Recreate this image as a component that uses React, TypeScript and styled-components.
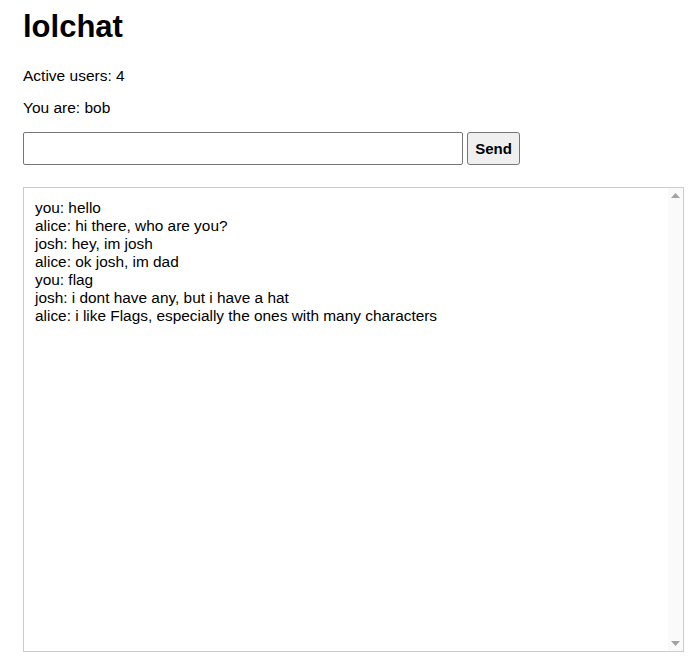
import React from "react";
import styled, { createGlobalStyle } from "styled-components";

const Global = createGlobalStyle`
  html, body { margin: 0; padding: 0; background: #fff; }
  body { font-family: "Liberation Sans", Arial, sans-serif; color: #000; font-size: 16px; }
`;

const Page = styled.div`
  display: flex;
  flex-direction: column;
  align-items: flex-start;
  padding: 9px 23px 0;
`;

const Title = styled.h1`
  font-size: 31px;
  font-weight: bold;
  margin: 0 0 22px;
  line-height: 36px;
`;

const Info = styled.p`
  margin: 0 0 14px;
  font-size: 15.5px;
  line-height: 18.4px;
`;

const Form = styled.form`
  display: flex;
  gap: 4px;
  margin: 0 0 22px;
`;

const Input = styled.input`
  box-sizing: border-box;
  width: 440px;
  height: 33px;
  border: 1px solid #767676;
  border-radius: 2px;
  padding: 1px 4px;
  font-family: "Liberation Sans", Arial, sans-serif;
  font-size: 16px;
  background: #fff;
`;

const Button = styled.button`
  box-sizing: border-box;
  width: 53px;
  height: 33px;
  border: 1px solid #767676;
  border-radius: 3px;
  background: #efefef;
  font-family: "Liberation Sans", Arial, sans-serif;
  font-size: 15px;
  font-weight: bold;
  color: #000;
  padding: 0;
`;

const ChatBox = styled.div`
  box-sizing: border-box;
  width: 661px;
  height: 465px;
  border: 1px solid #ccc;
  display: flex;
`;

const Messages = styled.div`
  flex: 1;
  overflow-y: auto;
  scrollbar-width: none;
  padding: 11px 11px 9px;
`;

const Line = styled.div`
  font-size: 15.4px;
  line-height: 18px;
  white-space: pre-wrap;
`;

const ScrollTrack = styled.div`
  width: 15px;
  background: #fafafa;
  display: flex;
  flex-direction: column;
  justify-content: space-between;
`;

const ArrowCell = styled.div`
  height: 15px;
  display: flex;
  align-items: center;
  justify-content: center;
`;

const Arrow = ({ dir }: { dir: "up" | "down" }) => (
  <svg width="9" height="5" viewBox="0 0 9 5">
    <path d={dir === "up" ? "M4.5 0 L9 5 L0 5 Z" : "M0 0 L9 0 L4.5 5 Z"} fill="#a3a3a3" />
  </svg>
);

const messages = [
  "you: hello",
  "alice: hi there, who are you?",
  "josh: hey, im josh",
  "alice: ok josh, im dad",
  "you: flag",
  "josh: i dont have any, but i have a hat",
  "alice: i like Flags, especially the ones with many characters",
];

export default function App() {
  return (
    <>
      <Global />
      <Page>
        <Title>lolchat</Title>
        <Info>Active users: 4</Info>
        <Info>You are: bob</Info>
        <Form onSubmit={(e) => e.preventDefault()}>
          <Input type="text" />
          <Button type="submit">Send</Button>
        </Form>
        <ChatBox>
          <Messages>
            {messages.map((m, i) => (
              <Line key={i}>{m}</Line>
            ))}
          </Messages>
          <ScrollTrack>
            <ArrowCell>
              <Arrow dir="up" />
            </ArrowCell>
            <ArrowCell>
              <Arrow dir="down" />
            </ArrowCell>
          </ScrollTrack>
        </ChatBox>
      </Page>
    </>
  );
}
